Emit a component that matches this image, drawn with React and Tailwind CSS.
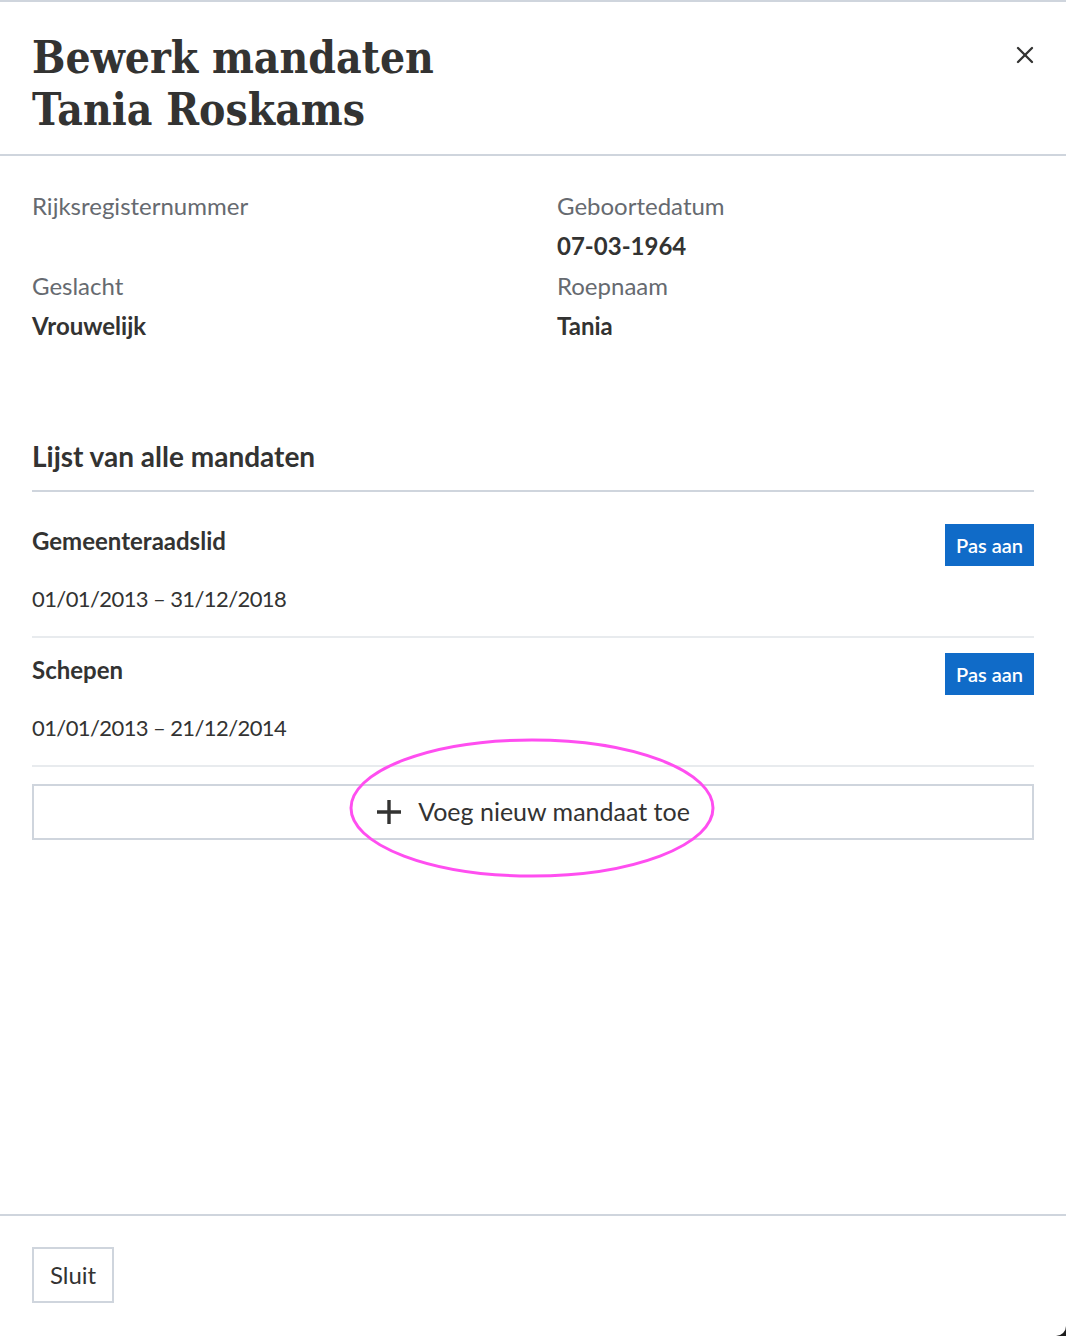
import { X } from "lucide-react";

const sans = { fontFamily: "Lato, 'Open Sans', sans-serif" };

function Field({ label, value }) {
  return (
    <div className="flex flex-col">
      <span className="text-[24px] leading-[40px] text-[#666a70]">{label}</span>
      <span className="text-[24px] leading-[40px] font-bold text-[#333332] min-h-[40px]">{value}</span>
    </div>
  );
}

function Mandaat({ title, period }) {
  return (
    <div className="border-b-2 border-[#e8ebee] pt-[15px] pb-[20px] flex justify-between items-start">
      <div className="flex flex-col">
        <span className="text-[24px] leading-[34px] font-bold text-[#333332]">{title}</span>
        <span className="text-[22px] leading-[34px] mt-[24px] tracking-[-0.6px] text-[#333332]">{period}</span>
      </div>
      <button className="bg-[#106bc8] text-white text-[20px] font-semibold h-[42px] px-[11px]">Pas aan</button>
    </div>
  );
}

export default function App() {
  return (
    <div className="w-[1066px] h-[1336px] bg-[#1d1d1d]">
      <div
        className="w-[1066px] h-[1336px] bg-white border-t-2 border-[#cfd5dd] rounded-br-[10px] flex flex-col"
        style={sans}
      >
        <header className="h-[154px] border-b-2 border-[#cfd5dd] flex justify-between px-[32px] pt-[30px]">
          <h1
            className="text-[44px] leading-[52px] font-bold text-[#333332]"
            style={{ fontFamily: "'DejaVu Serif Condensed', 'DejaVu Serif', serif" }}
          >
            Bewerk mandaten
            <br />
            Tania Roskams
          </h1>
          <button className="mt-[8px] h-[30px] w-[30px] flex items-center justify-center text-[#333332] -mr-[6px]">
            <X size={28} strokeWidth={2} />
          </button>
        </header>

        <main className="flex-1 px-[32px] pt-[30px]">
          <div className="grid grid-cols-[525px_1fr]">
            <Field label="Rijksregisternummer" value="" />
            <Field label="Geboortedatum" value="07-03-1964" />
            <Field label="Geslacht" value="Vrouwelijk" />
            <Field label="Roepnaam" value="Tania" />
          </div>

          <h2 className="mt-[92px] mb-[17px] text-[28px] leading-[36px] font-bold text-[#333332] pb-[16px] border-b-2 border-[#cfd5dd]">
            Lijst van alle mandaten
          </h2>

          <Mandaat title="Gemeenteraadslid" period="01/01/2013 – 31/12/2018" />
          <Mandaat title="Schepen" period="01/01/2013 – 21/12/2014" />

          <div className="relative mt-[17px]">
            <button className="w-full h-[56px] border-2 border-[#cfd5dd] flex items-center justify-center gap-[16px] text-[25px] text-[#333332]">
              <svg width="26" height="26" viewBox="0 0 26 26">
                <path d="M13 1V25M1 13H25" stroke="#333332" strokeWidth="3.4" fill="none" />
              </svg>
              <span>Voeg nieuw mandaat toe</span>
            </button>
            <svg
              className="absolute left-[316px] top-[-48px] pointer-events-none"
              width="370"
              height="144"
              viewBox="0 0 370 144"
            >
              <ellipse cx="184" cy="72" rx="181" ry="68" fill="none" stroke="#ff4ef0" strokeWidth="3" />
            </svg>
          </div>
        </main>

        <footer className="h-[122px] border-t-2 border-[#cfd5dd] px-[32px] pt-[31px]">
          <button className="h-[56px] px-[16px] border-2 border-[#cfd5dd] text-[24px] text-[#333332]">Sluit</button>
        </footer>
      </div>
    </div>
  );
}
